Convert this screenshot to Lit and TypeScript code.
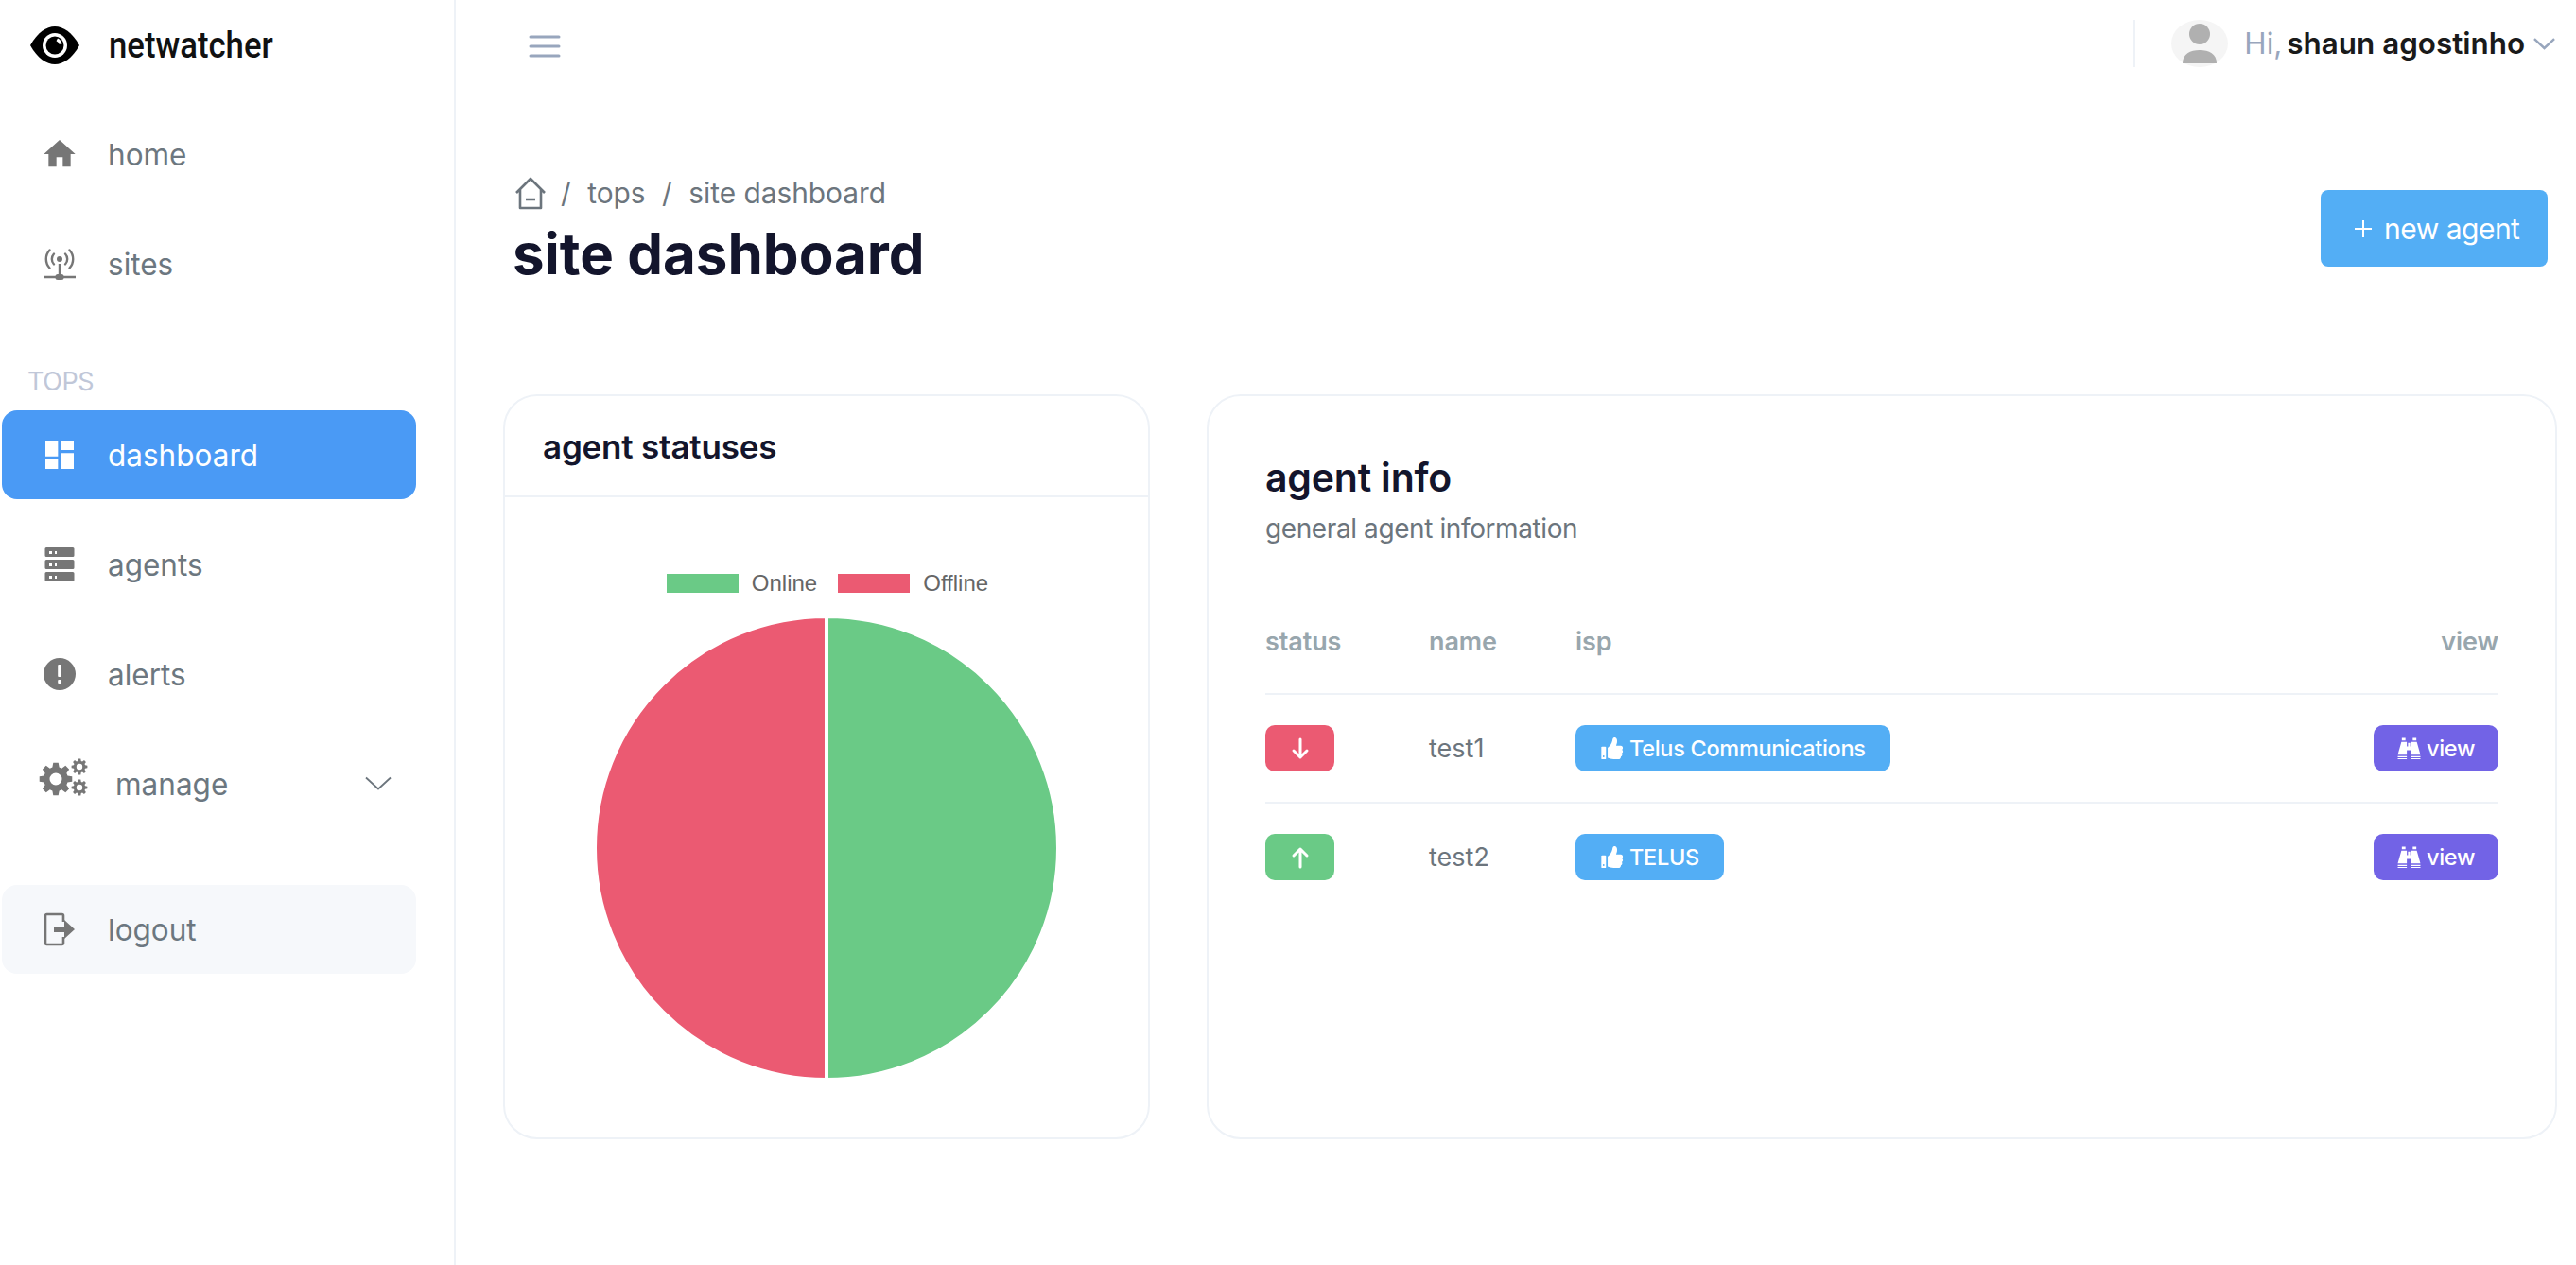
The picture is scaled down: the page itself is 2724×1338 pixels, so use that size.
import { LitElement, css, html, svg } from 'lit';
import { customElement, state } from 'lit/decorators.js';

// gear outline with a round hole, generated since there are three of them
function gear(cx: number, cy: number, r: number, teeth: number, hole: number) {
  const pts: string[] = [];
  const step = (Math.PI * 2) / teeth;
  const inner = r * 0.74;
  for (let i = 0; i < teeth; i++) {
    const a = i * step;
    const corners: [number, number][] = [
      [inner, a - step * 0.36],
      [r, a - step * 0.2],
      [r, a + step * 0.2],
      [inner, a + step * 0.36],
    ];
    for (const [rad, ang] of corners) {
      pts.push(`${(cx + rad * Math.cos(ang)).toFixed(2)} ${(cy + rad * Math.sin(ang)).toFixed(2)}`);
    }
  }
  return `M${pts.join('L')}Z M${cx + hole} ${cy}a${hole} ${hole} 0 1 0 ${-hole * 2} 0a${hole} ${hole} 0 1 0 ${hole * 2} 0Z`;
}

const icons = {
  home: svg`<svg class="ico" viewBox="0 0 24 24" fill="currentColor"><path d="M10 20v-6h4v6h5v-8h3L12 3 2 12h3v8z"/></svg>`,
  sites: svg`<svg class="ico" viewBox="0 0 40 40" fill="none" stroke="currentColor" stroke-width="2.4" stroke-linecap="round">
    <circle cx="20" cy="15" r="3" fill="currentColor" stroke="none"/>
    <path d="M14 9.5a8 8 0 0 0 0 11M26 9.5a8 8 0 0 1 0 11M9.5 5.5a14 14 0 0 0 0 19M30.500 5.500a14 14 0 0 1 0 19"/>
    <path d="M20 20v12" stroke-linecap="butt"/>
    <path d="M3 34h34" stroke-width="2.600" stroke-linecap="butt"/>
    <rect x="15.500" y="31" width="9" height="6" rx="2.500" fill="currentColor" stroke="none"/>
  </svg>`,
  dashboard: svg`<svg class="ico" viewBox="0 0 24 24" fill="currentColor"><path d="M3 13h8V3H3v10zm0 8h8v-6H3v6zm10 0h8V11h-8v10zm0-18v6h8V3h-8z"/></svg>`,
  agents: svg`<svg class="ico" viewBox="0 0 40 40" fill="currentColor">
    <path fill-rule="evenodd" d="M6 2h28a1.500 1.500 0 0 1 1.500 1.500v7a1.500 1.500 0 0 1-1.500 1.500H6a1.500 1.500 0 0 1-1.500-1.500v-7A1.500 1.500 0 0 1 6 2zm3 4v3h3V6zm6 0v3h2V6z"/>
    <path fill-rule="evenodd" d="M6 15h28a1.500 1.500 0 0 1 1.500 1.500v7a1.500 1.500 0 0 1-1.500 1.500H6a1.500 1.500 0 0 1-1.500-1.500v-7A1.500 1.500 0 0 1 6 15zm3 4v3h3v-3zm6 0v3h2v-3z"/>
    <path fill-rule="evenodd" d="M6 28h28a1.500 1.500 0 0 1 1.500 1.500v7a1.500 1.500 0 0 1-1.500 1.500H6a1.500 1.500 0 0 1-1.500-1.500v-7A1.500 1.500 0 0 1 6 28zm3 4v3h3v-3zm6 0v3h2v-3z"/>
  </svg>`,
  alerts: svg`<svg class="ico" viewBox="0 0 40 40"><circle cx="20" cy="20" r="17" fill="currentColor"/><rect x="18.200" y="10" width="3.600" height="13" rx="1" fill="#fff"/><rect x="18.200" y="26" width="3.600" height="4" rx="1" fill="#fff"/></svg>`,
  logout: svg`<svg class="ico" viewBox="0 0 40 40" fill="none" stroke="currentColor" stroke-width="2.600">
    <path d="M24 12V5.500a1.500 1.500 0 0 0-1.500-1.500H6.500A1.500 1.500 0 0 0 5 5.500v29A1.500 1.500 0 0 0 6.500 36h16a1.500 1.500 0 0 0 1.500-1.500V28"/>
    <path d="M14 17h11v-7l11 10-11 10v-7H14z" fill="currentColor" stroke="none"/>
  </svg>`,
  chevron: svg`<svg class="chev" viewBox="0 0 28 16" fill="none" stroke="currentColor" stroke-width="1.800"><path d="M1 1.500l13 12 13-12"/></svg>`,
  thumb: svg`<svg class="thumb" viewBox="0 0 26 28" fill="currentColor">
    <rect x="0.500" y="12" width="5.500" height="15" rx="1"/>
    <circle cx="3.200" cy="23.500" r="1" fill="#53aef5"/>
    <path d="M8 13.500c2.500-2 5-5.500 5.500-8.500.3-2 .8-4 2.500-4 2.700 0 3.700 3 3 6.500l-1 3.500h5.500c1.600 0 2.500 1.200 2.500 2.500 0 1-.5 1.700-1 2.200.6.500 1 1.200 1 2 0 1-.6 1.800-1.300 2.300.3.400.5 1 .5 1.600 0 1-.6 1.800-1.500 2.200.1 1.800-1.100 3.200-3 3.200H15c-2.800 0-5-1-7-1.700z"/>
  </svg>`,
  binoculars: svg`<svg class="bino" viewBox="0 0 26 24" fill="currentColor">
    <path d="M5 0.500h4v3H5zM17 0.500h4v3h-4z"/>
    <path d="M4.500 5h6v5h1.300V6h2.400v4h1.300V5h6l4 14H15.500v-5h-5v5H.500z"/>
    <path d="M.500 20.500h10v1.500H.500zM.500 23h10v1H.500zM15.500 20.500h10v1.500h-10zM15.500 23h10v1h-10z"/>
  </svg>`,
};

const cogs = svg`<svg class="cogs" viewBox="0 0 52 40" fill="currentColor">
  <path fill-rule="evenodd" d=${gear(18, 22, 17.5, 8, 6.500)}/>
  <path fill-rule="evenodd" d=${gear(43, 9, 8.500, 8, 3.200)}/>
  <path fill-rule="evenodd" d=${gear(43, 31, 8.500, 8, 3.200)}/>
</svg>`;

interface Agent { name: string; up: boolean; isp: string; }
interface Slice { label: string; value: number; color: string; }

@customElement('status-pie')
export class StatusPie extends LitElement {
  static styles = css`
    :host { display: block; }
    .legend {
      display: flex;
      justify-content: center;
      align-items: center;
      gap: 22px;
      height: 36px;
      padding-left: 2px;
      font: 24px 'Liberation Sans', Arial, sans-serif;
      color: #666;
    }
    .legend span { display: flex; align-items: center; gap: 14px; }
    .legend i { width: 76px; height: 20px; display: block; }
    svg { display: block; margin: 15px auto 0; }
  `;

  slices: Slice[] = [
    { label: 'Online', value: 1, color: '#6aca86' },
    { label: 'Offline', value: 1, color: '#eb5a72' },
  ];

  private _paths() {
    const total = this.slices.reduce((s, x) => s + x.value, 0);
    const r = 245, c = 247;
    let a = -Math.PI / 2;
    return this.slices.map(sl => {
      const b = a + (sl.value / total) * Math.PI * 2;
      const large = b - a > Math.PI ? 1 : 0;
      const d = `M${c} ${c}L${c + r * Math.cos(a)} ${c + r * Math.sin(a)}A${r} ${r} 0 ${large} 1 ${c + r * Math.cos(b)} ${c + r * Math.sin(b)}Z`;
      a = b;
      return svg`<path d=${d} fill=${sl.color} stroke="#fff" stroke-width="4"/>`;
    });
  }

  render() {
    return html`
      <div class="legend">
        ${this.slices.map(s => html`<span><i style="background:${s.color}"></i>${s.label}</span>`)}
      </div>
      <svg width="494" height="494" viewBox="0 0 494 494">${this._paths()}</svg>
    `;
  }
}

@customElement('app-root')
export class AppRoot extends LitElement {
  @state() agents: Agent[] = [
    { name: 'test1', up: false, isp: 'Telus Communications' },
    { name: 'test2', up: true, isp: 'TELUS' },
  ];

  static styles = css`
    :host {
      display: flex;
      min-height: 1338px;
      background: #fff;
      font-family: Inter, 'Noto Sans', sans-serif;
      color: #6c757d;
    }
    .side {
      width: 482px;
      box-sizing: border-box;
      border-right: 2px solid #eef2f7;
      flex: none;
      padding-right: 40px;
    }
    .logo {
      display: flex;
      align-items: center;
      height: 96px;
      padding-left: 32px;
      gap: 31px;
      margin-bottom: 20px;
    }
    .logo svg { width: 52px; height: 40px; flex: none; }
    .logo span {
      font: 500 39px Roboto, sans-serif;
      color: #111;
      transform: scaleX(0.89);
      transform-origin: left center;
    }
    nav { display: flex; flex-direction: column; gap: 22px; }
    .item {
      display: flex;
      align-items: center;
      height: 94px;
      margin-left: 2px;
      padding-left: 41px;
      gap: 31px;
      border-radius: 16px;
      font-size: 31.5px;
      color: #6c7780;
    }
    .item .ico { width: 40px; height: 40px; color: #767676; flex: none; }
    .item.active { background: #4a9af5; color: #fff; }
    .item.active .ico { color: #fff; }
    .item.logout { background: #f6f8fb; margin-top: 38px; }
    .section {
      font-size: 27px;
      color: #c0c7d8;
      padding: 63px 0 15px 29px;
      line-height: 30px;
      letter-spacing: -0.4px;
      margin: -22px 0;
    }
    .cogs { width: 52px; height: 40px; color: #767676; flex: none; margin: -14px -2px 0 -2px; }
    .manage { padding-right: 26px; }
    .manage .chev { width: 28px; height: 16px; margin-left: auto; color: #6c757d; }
    main { flex: 1; min-width: 0; padding: 0 21px 0 50px; }
    .top {
      display: flex;
      align-items: center;
      height: 92px;
      padding-left: 27px;
    }
    .burger { width: 34px; height: 28px; color: #98a6bd; margin-top: 5px; }
    .user {
      margin-left: auto;
      display: flex;
      align-items: center;
      height: 50px;
      border-left: 2px solid #eef2f7;
      padding-left: 38px;
      margin-right: 1px;
      font-size: 31.4px;
    }
    .avatar { width: 60px; height: 50px; flex: none; margin-right: 17px; }
    .hi { color: #98a6bd; margin-right: 5px; }
    .who { color: #1a1a1a; font-weight: 600; margin-right: 9px; }
    .user .chev { width: 23px; height: 13px; color: #98a6bd; stroke-width: 3; }
    .head {
      display: flex;
      justify-content: space-between;
      align-items: flex-start;
      height: 325px;
      box-sizing: border-box;
      padding: 94px 9px 0 10px;
    }
    .crumbs {
      display: flex;
      align-items: center;
      height: 36px;
      font-size: 29.800px;
      color: #6c757d;
    }
    .crumbs svg { width: 34px; height: 36px; margin: 0 15px 0 2px; }
    .crumbs em { font-style: normal; margin: 0 17.500px; }
    .crumbs em:first-of-type { margin-left: 0; }
    h1 {
      margin: 12px 0 0;
      font-size: 60px;
      line-height: 68px;
      font-weight: 700;
      color: #13152c;
    }
    .new {
      display: flex;
      align-items: center;
      gap: 13px;
      margin-top: 15px;
      width: 240px;
      height: 81px;
      box-sizing: border-box;
      padding-left: 36px;
      background: #53aef5;
      color: #fff;
      border-radius: 8px;
      font-size: 30px;
      letter-spacing: -0.5px;
    }
    .new svg { width: 18px; height: 18px; }
    .cards {
      display: grid;
      grid-template-columns: 684px 1428px;
      gap: 60px;
    }
    .card {
      height: 788px;
      box-sizing: border-box;
      border: 2px solid #eef2f7;
      border-radius: 36px;
    }
    .card-head {
      height: 107px;
      box-sizing: border-box;
      border-bottom: 2px solid #eef2f7;
      padding: 0 40px;
      display: flex;
      align-items: center;
    }
    h2 {
      margin: 0;
      font-size: 35px;
      font-weight: 600;
      color: #13152c;
      letter-spacing: -0.2px;
    }
    status-pie { padding-top: 73px; }
    .info { padding: 61px 60px 0; }
    .info h2 { font-size: 41px; line-height: 50px; }
    .info p { margin: 11px 0 0; font-size: 28px; line-height: 36px; letter-spacing: -0.4px; color: #6c757d; }
    table { width: 100%; border-collapse: collapse; margin-top: 46px; }
    th {
      height: 110px;
      padding: 0;
      text-align: left;
      font-size: 27px;
      font-weight: 600;
      color: #98a6ad;
      border-bottom: 2px solid #eef2f7;
      letter-spacing: -0.1px;
    }
    td { height: 113px; padding: 0; font-size: 27px; color: #6c757d; }
    tr + tr td { border-top: 2px solid #eef2f7; }
    .right { text-align: right; }
    .badge {
      display: inline-flex;
      align-items: center;
      justify-content: center;
      height: 49px;
      box-sizing: border-box;
      border-radius: 10px;
      color: #fff;
      font-size: 23.500px;
      font-weight: 500;
      vertical-align: middle;
      letter-spacing: -0.3px;
    }
    .state { width: 73px; }
    .state svg { width: 22px; height: 24px; }
    .up { background: #6aca86; }
    .down { background: #eb5a72; }
    .isp { background: #53aef5; padding: 0 26px; gap: 6px; }
    .view { background: #7263e6; width: 132px; gap: 6px; }
    .thumb { width: 25px; height: 25px; }
    .bino { width: 25px; height: 23px; }
  `;

  private _row(a: Agent) {
    return html`
      <tr>
        <td>
          <span class="badge state ${a.up ? 'up' : 'down'}">
            <svg viewBox="0 0 22 24" fill="none" stroke="currentColor" stroke-width="3" stroke-linecap="round" stroke-linejoin="round">
              ${a.up
                ? svg`<path d="M11 22V3M4 10l7-7 7 7"/>`
                : svg`<path d="M11 2v19M4 14l7 7 7-7"/>`}
            </svg>
          </span>
        </td>
        <td>${a.name}</td>
        <td><span class="badge isp">${icons.thumb}${a.isp}</span></td>
        <td class="right"><span class="badge view">${icons.binoculars}view</span></td>
      </tr>
    `;
  }

  render() {
    return html`
      <aside class="side">
        <div class="logo">
          <svg viewBox="0 0 52 40">
            <path d="M0 20C8 6 17 0 26 0s18 6 26 20c-8 14-17 20-26 20S8 34 0 20z" fill="#000"/>
            <circle cx="26" cy="20" r="13" fill="#fff"/>
            <circle cx="26" cy="20" r="9.500" fill="#000"/>
            <path d="M29 12.500a8 8 0 0 1 4.500 6l-3 .3a5 5 0 0 0-3-3.600z" fill="#fff"/>
          </svg>
          <span>netwatcher</span>
        </div>
        <nav>
          <div class="item">${icons.home}home</div>
          <div class="item">${icons.sites}sites</div>
          <div class="section">TOPS</div>
          <div class="item active">${icons.dashboard}dashboard</div>
          <div class="item">${icons.agents}agents</div>
          <div class="item">${icons.alerts}alerts</div>
          <div class="item manage">${cogs}manage${icons.chevron}</div>
          <div class="item logout">${icons.logout}logout</div>
        </nav>
      </aside>
      <main>
        <div class="top">
          <svg class="burger" viewBox="0 0 34 28" fill="none" stroke="currentColor" stroke-width="3" stroke-linecap="round">
            <path d="M2 4h30M2 14h30M2 24h30"/>
          </svg>
          <div class="user">
            <svg class="avatar" viewBox="0 0 60 50">
              <ellipse cx="30" cy="25" rx="30" ry="25" fill="#f5f5f5"/>
              <circle cx="30" cy="15" r="11" fill="#b0b0b0"/>
              <path d="M12 46c0-10 8-14 18-14s18 4 18 14z" fill="#b0b0b0"/>
            </svg>
            <span class="hi">Hi,</span>
            <span class="who">shaun agostinho</span>
            ${icons.chevron}
          </div>
        </div>
        <div class="head">
          <div>
            <div class="crumbs">
              <svg viewBox="0 0 34 36" fill="none" stroke="currentColor" stroke-width="2.600" stroke-linejoin="round">
                <path d="M2 18L17 3l15 15M6 14v20h22V14M12 25h10"/>
              </svg>
              <em>/</em>tops<em>/</em>site dashboard
            </div>
            <h1>site dashboard</h1>
          </div>
          <div class="new">
            <svg viewBox="0 0 18 18" stroke="currentColor" stroke-width="2"><path d="M9 0v18M0 9h18"/></svg>
            new agent
          </div>
        </div>
        <div class="cards">
          <section class="card">
            <div class="card-head"><h2>agent statuses</h2></div>
            <status-pie></status-pie>
          </section>
          <section class="card info">
            <h2>agent info</h2>
            <p>general agent information</p>
            <table>
              <colgroup><col style="width:173px"/><col style="width:155px"/><col/><col style="width:140px"/></colgroup>
              <thead><tr><th>status</th><th>name</th><th>isp</th><th class="right">view</th></tr></thead>
              <tbody>${this.agents.map(a => this._row(a))}</tbody>
            </table>
          </section>
        </div>
      </main>
    `;
  }
}
